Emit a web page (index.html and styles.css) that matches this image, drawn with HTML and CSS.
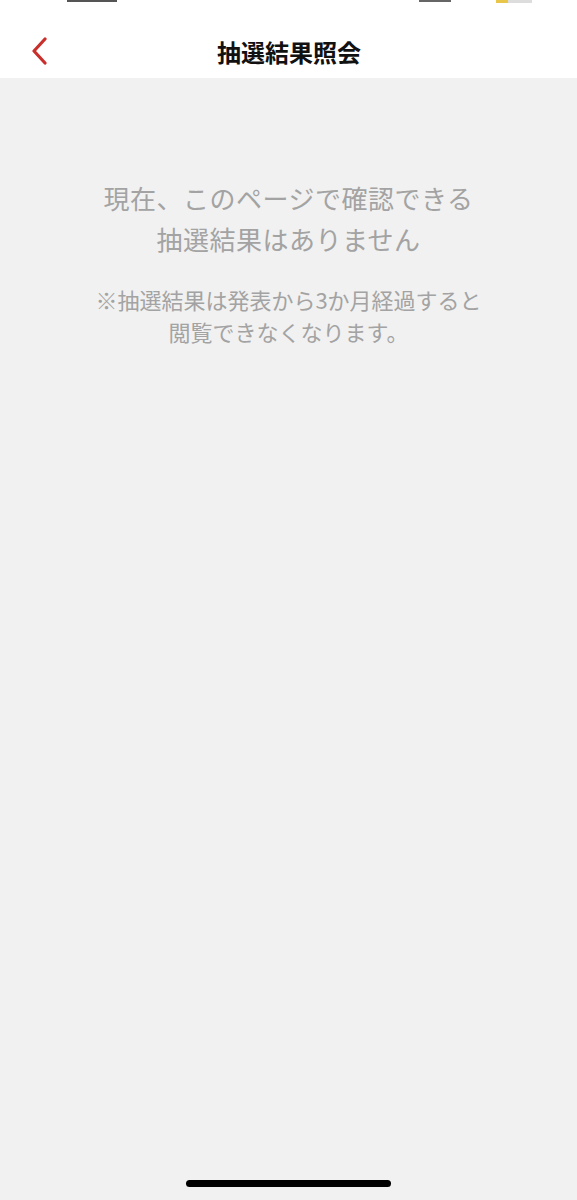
FILE: index.html
```html
<!DOCTYPE html>
<html lang="ja">
<head>
  <meta charset="UTF-8" />
  <meta name="viewport" content="width=device-width, initial-scale=1.0"/>
  <title>抽選結果照会</title>
  <link rel="stylesheet" href="styles.css">
</head>
<body>

  <!-- Header -->
  <header class="header">
    <div class="status-bar">
      <span class="status-time"></span>
      <span class="status-right">
        <span class="status-signal"></span>
        <span class="status-battery"></span>
      </span>
    </div>
    <div class="nav-bar">
      <a class="back" href="#">
        <svg width="18" height="28" viewBox="0 0 18 28">
          <path d="M14 2 L3 14 L14 26" fill="none" stroke="#c9302c" stroke-width="3.2" stroke-linecap="round" stroke-linejoin="round"/>
        </svg>
      </a>
      <h1 class="title">抽選結果照会</h1>
      <span class="nav-spacer"></span>
    </div>
  </header>

  <!-- Empty message -->
  <main class="content">
    <p class="empty-title">現在、このページで確認できる<br>抽選結果はありません</p>
    <p class="empty-note">※抽選結果は発表から3か月経過すると<br>閲覧できなくなります。</p>
  </main>

  <div class="home-indicator"></div>

</body>
</html>
```

FILE: styles.css
```css
* {
  box-sizing: border-box;
  margin: 0;
  padding: 0;
}
html, body {
  height: 100%;
}
body {
  background-color: #f1f1f1;
  font-family: "Noto Sans CJK JP", "Noto Sans", sans-serif;
  display: flex;
  flex-direction: column;
}
.header {
  background-color: #fff;
  height: 78px;
}
.status-bar {
  height: 24px;
  display: flex;
  align-items: flex-start;
  justify-content: space-between;
  padding: 0 45px 0 67px;
}
.status-time {
  width: 50px;
  height: 2px;
  background-color: #555;
}
.status-right {
  display: flex;
  gap: 45px;
}
.status-signal {
  width: 32px;
  height: 2px;
  background-color: #666;
}
.status-battery {
  width: 36px;
  height: 3px;
  background: linear-gradient(to right, #e8c64a 0 12px, #ddd 12px);
}
.nav-bar {
  display: flex;
  align-items: center;
  justify-content: space-between;
  height: 54px;
  padding: 0 30px 0 31px;
}
.back {
  display: flex;
  width: 40px;
}
.nav-spacer {
  width: 40px;
}
.title {
  font-size: 24px;
  font-weight: bold;
  color: #111;
}
.content {
  flex: 1;
  text-align: center;
  padding-top: 99px;
}
.empty-title {
  font-size: 26px;
  line-height: 41px;
  color: #a3a3a3;
  letter-spacing: 0.5px;
}
.empty-note {
  margin-top: 24px;
  font-size: 22px;
  line-height: 32px;
  color: #a3a3a3;
}
.home-indicator {
  width: 205px;
  height: 7px;
  border-radius: 4px;
  background-color: #000;
  margin: 0 auto 13px;
}
```
